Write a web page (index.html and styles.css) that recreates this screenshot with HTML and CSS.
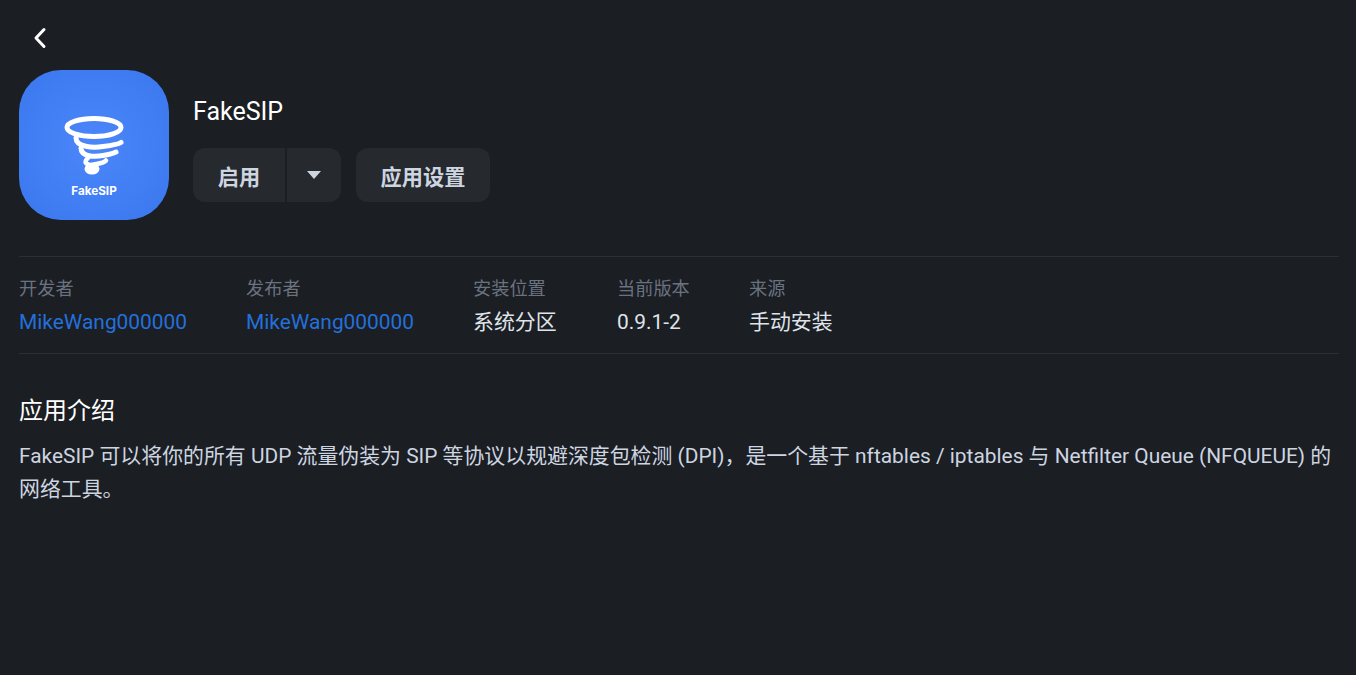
FILE: index.html
```html
<!DOCTYPE html>
<html lang="zh-CN">
<head>
  <meta charset="UTF-8">
  <meta name="viewport" content="width=device-width, initial-scale=1.0">
  <title>FakeSIP</title>
  <link rel="stylesheet" href="styles.css">
</head>
<body>

<div class="page">
  <button class="back-btn" aria-label="返回">
    <svg width="14" height="22" viewBox="0 0 14 22"><path d="M11 2.500 L3 11 L11 19.500" fill="none" stroke="#fff" stroke-width="3" stroke-linecap="round" stroke-linejoin="round"/></svg>
  </button>

  <div class="app-head">
    <div class="app-icon">
      <svg width="62" height="60" viewBox="0 0 62 60">
        <g fill="none" stroke="#fff" stroke-width="5" stroke-linecap="round">
          <ellipse cx="31" cy="12.500" rx="27" ry="9"/>
          <path d="M13 23 C13 32 30 33 40 31.500 C48 30.500 55 29.500 58 27.500" />
          <path d="M18 33 C18 42 32 42 40 40.500 C46 39.500 50 38.500 53 37" />
          <path d="M25 43 C20 47 23 51 31 49.500 C36 48.500 41 48 43 45.500" stroke-width="4.500"/>
        </g>
        <ellipse cx="29" cy="54" rx="7.500" ry="5.500" fill="#fff"/>
      </svg>
      <span class="app-icon-label">FakeSIP</span>
    </div>
    <div class="app-main">
      <h1 class="app-name">FakeSIP</h1>
      <div class="actions">
        <div class="btn-group">
          <button class="btn btn-left">启用</button>
          <button class="btn btn-arrow" aria-label="更多"><span class="caret"></span></button>
        </div>
        <button class="btn btn-settings">应用设置</button>
      </div>
    </div>
  </div>

  <div class="meta">
    <div class="meta-item meta-dev">
      <div class="meta-label">开发者</div>
      <a class="meta-link" href="#">MikeWang000000</a>
    </div>
    <div class="meta-item meta-pub">
      <div class="meta-label">发布者</div>
      <a class="meta-link" href="#">MikeWang000000</a>
    </div>
    <div class="meta-item meta-loc">
      <div class="meta-label">安装位置</div>
      <div class="meta-value">系统分区</div>
    </div>
    <div class="meta-item meta-ver">
      <div class="meta-label">当前版本</div>
      <div class="meta-value">0.9.1-2</div>
    </div>
    <div class="meta-item">
      <div class="meta-label">来源</div>
      <div class="meta-value">手动安装</div>
    </div>
  </div>

  <section class="intro">
    <h2 class="intro-title">应用介绍</h2>
    <p class="intro-text">FakeSIP 可以将你的所有 UDP 流量伪装为 SIP 等协议以规避深度包检测 (DPI)，是一个基于 nftables / iptables 与 Netfilter Queue (NFQUEUE) 的网络工具。</p>
  </section>
</div>

</body>
</html>
```

FILE: styles.css
```css
html, body {
  margin: 0;
  padding: 0;
}
body {
  background: #1b1e23;
  color: #cdd5e0;
  font-family: Roboto, "Noto Sans CJK SC", sans-serif;
  height: 675px;
  overflow: hidden;
}
.page {
  padding: 0 17px 0 19px;
}
button {
  font-family: inherit;
  border: none;
  cursor: pointer;
}
.back-btn {
  display: block;
  background: none;
  padding: 0;
  width: 14px;
  height: 22px;
  margin: 27px 0 0 14px;
}
.app-head {
  display: flex;
  gap: 24px;
  margin-top: 21px;
  padding-bottom: 36px;
  border-bottom: 1px solid #2c2f34;
}
.app-icon {
  width: 150px;
  height: 150px;
  border-radius: 42px;
  background: radial-gradient(circle at center, #4b87fa, #3a77ee);
  display: flex;
  flex-direction: column;
  align-items: center;
  padding-top: 45px;
  box-sizing: border-box;
}
.app-icon-label {
  color: #fff;
  font-family: Inter, sans-serif;
  font-size: 11.7px;
  font-weight: 700;
  margin-top: 9px;
  line-height: 14px;
}
.app-main {
  padding-top: 27px;
}
.app-name {
  margin: 0;
  font-size: 25px;
  font-weight: 400;
  line-height: 30px;
  color: #fff;
}
.actions {
  display: flex;
  gap: 15px;
  margin-top: 21px;
}
.btn-group {
  display: flex;
  gap: 2px;
}
.btn {
  height: 54px;
  background: #26292e;
  color: #cdd5e0;
  font-size: 21.2px;
  font-weight: 700;
  padding: 0;
}
.btn-left {
  width: 92px;
  border-radius: 12px 0 0 12px;
}
.btn-arrow {
  width: 54px;
  border-radius: 0 12px 12px 0;
  display: flex;
  align-items: center;
  justify-content: center;
}
.caret {
  width: 0;
  height: 0;
  border-left: 7.5px solid transparent;
  border-right: 7.5px solid transparent;
  border-top: 8px solid #cdd5e0;
}
.btn-settings {
  width: 134px;
  border-radius: 12px;
}
.meta {
  display: flex;
  padding: 20px 0 16px;
  border-bottom: 1px solid #2c2f34;
}
.meta-dev, .meta-pub {
  width: 227px;
}
.meta-loc {
  width: 144px;
}
.meta-ver {
  width: 132px;
}
.meta-label {
  color: #6a7280;
  font-size: 18.2px;
  line-height: 24px;
}
.meta-value, .meta-link {
  display: block;
  font-size: 20.9px;
  line-height: 30px;
  margin-top: 6px;
  color: #dfe4ea;
}
.meta-link {
  color: #2470dc;
  text-decoration: none;
}
.intro {
  margin-top: 42px;
}
.intro-title {
  margin: 0;
  font-size: 24px;
  font-weight: 400;
  line-height: 30px;
  color: #fff;
}
.intro-text {
  margin: 14px 0 0;
  font-size: 20.9px;
  line-height: 33px;
}
```
